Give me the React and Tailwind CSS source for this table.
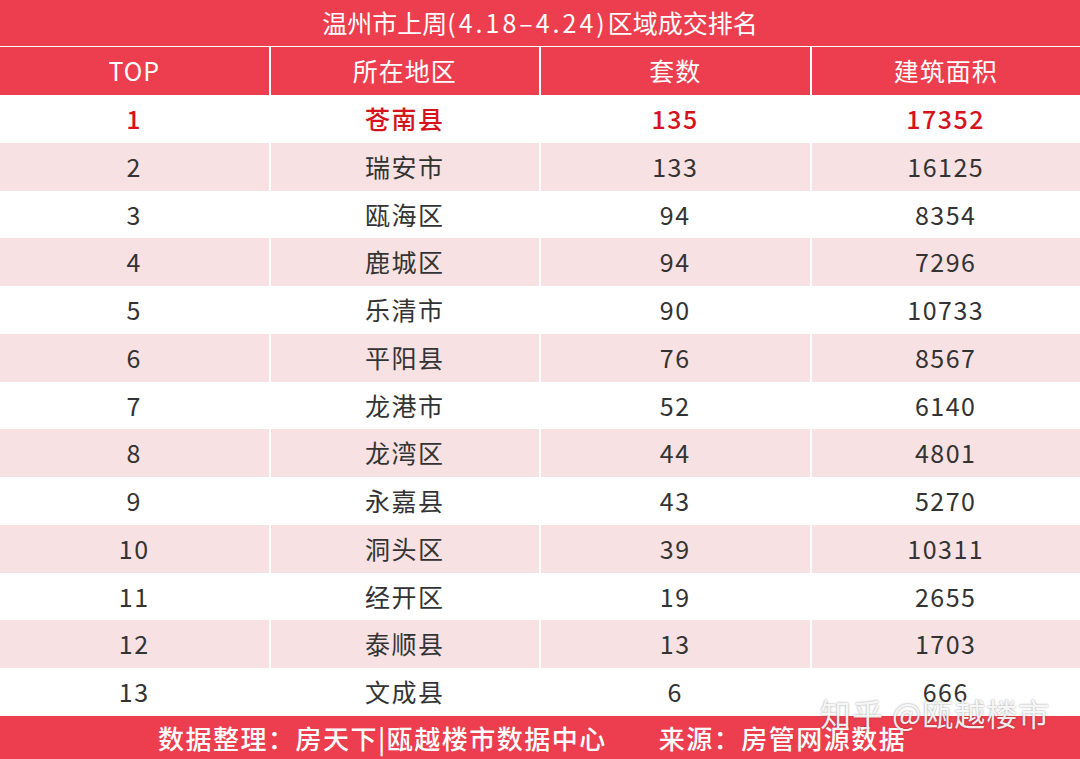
import React from 'react';

const rows = [
  ['1', '苍南县', '135', '17352'],
  ['2', '瑞安市', '133', '16125'],
  ['3', '瓯海区', '94', '8354'],
  ['4', '鹿城区', '94', '7296'],
  ['5', '乐清市', '90', '10733'],
  ['6', '平阳县', '76', '8567'],
  ['7', '龙港市', '52', '6140'],
  ['8', '龙湾区', '44', '4801'],
  ['9', '永嘉县', '43', '5270'],
  ['10', '洞头区', '39', '10311'],
  ['11', '经开区', '19', '2655'],
  ['12', '泰顺县', '13', '1703'],
  ['13', '文成县', '6', '666'],
];

const font = { fontFamily: '"Noto Sans CJK SC", "Noto Sans", sans-serif' };

export default function App() {
  return (
    <div className="relative w-[1080px] h-[759px] bg-white overflow-hidden" style={font}>
      {/* title */}
      <div className="h-[46px] bg-[#ec3e4e] flex items-center justify-center text-white text-[25px]">
        <span>温州市上周</span>
        <span className="tracking-[3px]">(4.18–4.24)</span>
        <span>区域成交排名</span>
      </div>
      {/* header */}
      <div className="mt-[1px] h-[48px] grid grid-cols-4 gap-[2px] bg-white">
        {['TOP', '所在地区', '套数', '建筑面积'].map((h) => (
          <div key={h} className="bg-[#ec3e4e] flex items-center justify-center text-white text-[25px] tracking-[1px]">
            {h}
          </div>
        ))}
      </div>
      {/* body */}
      <div className="flex flex-col">
        {rows.map((r, i) => {
          const first = i === 0;
          const pink = i % 2 === 1;
          return (
            <div key={r[0]} className="h-[47.75px] grid grid-cols-4 gap-[2px] bg-white">
              {r.map((c, j) => (
                <div
                  key={j}
                  className={
                    'flex items-center justify-center text-[25px] tracking-[1.5px] ' +
                    (pink ? 'bg-[#f7e1e2] ' : 'bg-white ') +
                    (first ? 'text-[#d5131c] font-medium' : 'text-[#333333]')
                  }
                >
                  {c}
                </div>
              ))}
            </div>
          );
        })}
      </div>
      {/* footer */}
      <div className="h-[43px] bg-[#ec3e4e] flex items-center pl-[158px] text-white text-[26px] font-medium tracking-[1.5px]">
        <span>数据整理：房天下|瓯越楼市数据中心</span>
        <span className="ml-[52px]">来源：房管网源数据</span>
      </div>
      {/* watermark */}
      <div className="absolute left-[820px] top-[690px] text-[31px] text-white/90 tracking-[1px] [text-shadow:0_0_2px_rgba(0,0,0,0.45)]">
        知乎 @瓯越楼市
      </div>
    </div>
  );
}
